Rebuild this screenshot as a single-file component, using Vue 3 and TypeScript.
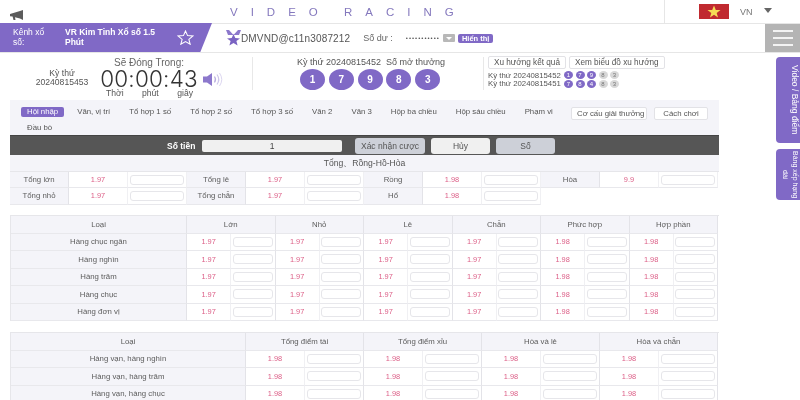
<script setup lang="ts">
const navItems = ['Văn, vị trí', 'Tổ hợp 1 số', 'Tổ hợp 2 số', 'Tổ hợp 3 số', 'Văn 2', 'Văn 3', 'Hộp ba chiều', 'Hộp sáu chiều', 'Phạm vi', 'Đầu bò']
const balls = ['1', '7', '9', '8', '3']
const history = [
  { id: '20240815452', nums: ['1', '7', '9', '8', '3'] },
  { id: '20240815451', nums: ['7', '8', '4', '8', '3'] },
]

const sumRows = [
  [
    { label: 'Tổng lớn', odds: '1.97' },
    { label: 'Tổng lẻ', odds: '1.97' },
    { label: 'Rồng', odds: '1.98' },
    { label: 'Hòa', odds: '9.9' },
  ],
  [
    { label: 'Tổng nhỏ', odds: '1.97' },
    { label: 'Tổng chẵn', odds: '1.97' },
    { label: 'Hổ', odds: '1.98' },
  ],
]

const digitHeads = ['Lớn', 'Nhỏ', 'Lẻ', 'Chẵn', 'Phức hợp', 'Hợp phần']
const digitOdds = ['1.97', '1.97', '1.97', '1.97', '1.98', '1.98']
const digitRows = ['Hàng chục ngân', 'Hàng nghìn', 'Hàng trăm', 'Hàng chục', 'Hàng đơn vị']

const pairHeads = ['Tổng điểm tài', 'Tổng điểm xỉu', 'Hòa và lẻ', 'Hòa và chẵn']
const pairRows = ['Hàng vạn, hàng nghìn', 'Hàng vạn, hàng trăm', 'Hàng vạn, hàng chục']
</script>

<template>
  <div class="page">
    <header class="topbar">
      <svg class="horn" viewBox="0 0 14 11" width="14" height="11">
        <path d="M0 4 L10 1 L13 0 L13 10 L10 8.5 L5 7.2 L5.5 10 L3.5 10 L2.6 6.6 L0 6.2 Z" fill="#5c5c5c" />
      </svg>
      <div class="brand">VIDEO RACING</div>
      <div class="lang">
        <svg class="flag" viewBox="0 0 30 15" width="30" height="15">
          <rect width="30" height="15" fill="#c02a30" />
          <polygon points="15,1.5 16.8,6 21.5,6 17.7,9 19,13.5 15,10.8 11,13.5 12.3,9 8.5,6 13.2,6" fill="#f5dc55" />
        </svg>
        <span class="lang-code">VN</span>
        <span class="lang-arrow"></span>
      </div>
    </header>

    <section class="account">
      <div class="channel">
        <span class="channel-label">Kênh xổ số:</span>
        <span class="channel-name">VR Kim Tinh Xổ số 1.5 Phút</span>
        <svg class="star" viewBox="0 0 18 16" width="17" height="15">
          <polygon points="9,1 11.2,6 17,6.4 12.6,10 14,15.2 9,12.4 4,15.2 5.4,10 1,6.4 6.8,6" fill="none" stroke="#fff" stroke-width="1.1" />
        </svg>
      </div>
      <svg class="medal" viewBox="0 0 15 16" width="15" height="16">
        <path d="M0 0 L3 0 L7.5 5 L12 0 L15 0 L13 5 L2 5 Z" fill="#8c78cc" />
        <polygon points="7.5,4 9.3,8 14,8.4 10.4,11 11.6,15.6 7.5,13 3.4,15.6 4.6,11 1,8.4 5.7,8" fill="#7a63c2" />
      </svg>
      <span class="user">DMVND@c11n3087212</span>
      <span class="balance-label">Số dư :</span>
      <span class="balance-dots">•••••••••••</span>
      <span class="balance-drop"></span>
      <span class="balance-show">Hiển thị</span>
      <div class="menu-btn"><i></i><i></i><i></i></div>
    </section>

    <section class="draw">
      <div class="issue">
        <span>Kỳ thứ</span>
        <span>20240815453</span>
      </div>
      <div class="timer">
        <div class="timer-title">Sẽ Đóng Trong:</div>
        <div class="timer-clock">00:00:43</div>
        <div class="timer-units"><span>Thời</span><span>phút</span><span>giây</span></div>
      </div>
      <svg class="sound" viewBox="0 0 20 15" width="20" height="15">
        <path d="M0 4.5 H4 L9 1 V14 L4 10.5 H0 Z" fill="#8c78cc" />
        <path d="M11.5 4.5 Q13.5 7.5 11.5 10.5" fill="none" stroke="#b9addf" stroke-width="1.2" />
        <path d="M14 2.5 Q17.5 7.5 14 12.5" fill="none" stroke="#cfc7ea" stroke-width="1.2" />
        <path d="M16.5 1 Q21 7.5 16.5 14" fill="none" stroke="#dcd6f0" stroke-width="1" />
      </svg>
      <div class="divider first"></div>
      <div class="latest">
        <div class="latest-title">Kỳ thứ 20240815452&nbsp; Số mở thưởng</div>
        <div class="balls">
          <span v-for="(b, i) in balls" :key="i" class="ball">{{ b }}</span>
        </div>
      </div>
      <div class="divider"></div>
      <div class="trend">
        <div class="trend-btns">
          <span class="ghost-btn">Xu hướng kết quả</span>
          <span class="ghost-btn">Xem biểu đồ xu hướng</span>
        </div>
        <div v-for="row in history" :key="row.id" class="trend-row">
          <span class="trend-id">Kỳ thứ {{ row.id }}</span>
          <span
            v-for="(n, i) in row.nums"
            :key="i"
            class="mini"
            :class="{ grey: i > 2 }"
          >{{ n }}</span>
        </div>
      </div>
    </section>

    <main class="board">
      <nav class="tabs">
        <ul class="tab-list">
          <li class="tab active">Hội nhập</li>
          <li v-for="item in navItems" :key="item" class="tab">{{ item }}</li>
        </ul>
        <div class="tab-actions">
          <span class="ghost-btn prize">Cơ cấu giải thưởng</span>
          <span class="ghost-btn howto">Cách chơi</span>
        </div>
      </nav>

      <div class="amount">
        <span class="amount-label">Số tiền</span>
        <div class="amount-input">1</div>
        <span class="amount-btn confirm">Xác nhận cược</span>
        <span class="amount-btn cancel">Hủy</span>
        <span class="amount-btn number">Số</span>
      </div>

      <div class="group-title">Tổng、Rồng-Hồ-Hòa</div>
      <div class="sum-table">
        <template v-for="(row, r) in sumRows" :key="r">
          <template v-for="cell in row" :key="cell.label">
            <div class="cell head">{{ cell.label }}</div>
            <div class="cell odds">{{ cell.odds }}</div>
            <div class="cell"><span class="field"></span></div>
          </template>
        </template>
      </div>

      <div class="grid digit-table">
        <div class="cell th">Loại</div>
        <div v-for="h in digitHeads" :key="h" class="cell th span2">{{ h }}</div>
        <template v-for="row in digitRows" :key="row">
          <div class="cell head">{{ row }}</div>
          <template v-for="(o, i) in digitOdds" :key="i">
            <div class="cell odds">{{ o }}</div>
            <div class="cell end"><span class="field"></span></div>
          </template>
        </template>
      </div>

      <div class="grid pair-table">
        <div class="cell th">Loại</div>
        <div v-for="h in pairHeads" :key="h" class="cell th span2">{{ h }}</div>
        <template v-for="row in pairRows" :key="row">
          <div class="cell head">{{ row }}</div>
          <template v-for="h in pairHeads" :key="h">
            <div class="cell odds">1.98</div>
            <div class="cell end"><span class="field"></span></div>
          </template>
        </template>
      </div>
    </main>

    <aside class="side-tab video">Video / Bảng điểm</aside>
    <aside class="side-tab rank">Bảng xếp hạng dài</aside>
  </div>
</template>

<style>
html,
body {
  margin: 0;
  background: #fff;
  overflow: hidden;
}
</style>

<style scoped>
.page {
  position: relative;
  width: 800px;
  height: 400px;
  overflow: hidden;
  background: #fff;
  color: #555;
  font-family: "Liberation Sans", Arial, sans-serif;
  font-size: 8px;
  filter: blur(0.45px);
}

.topbar {
  display: flex;
  align-items: center;
  height: 23px;
  border-bottom: 1px solid #e6e6e6;
  box-sizing: content-box;
}

.horn {
  margin: 7px 0 0 10px;
}

.brand {
  margin-left: 206px;
  width: 434px;
  color: #8478bd;
  font-size: 11.5px;
  letter-spacing: 13px;
  word-spacing: -3px;
  white-space: pre;
}

.lang {
  display: flex;
  align-items: center;
  align-self: stretch;
  flex: 1;
  border-left: 1px solid #e6e6e6;
  padding-left: 34px;
}

.lang-code {
  margin-left: 11px;
  font-size: 9px;
  color: #777;
}

.lang-arrow {
  margin: 0 0 2px 11px;
  border-left: 4px solid transparent;
  border-right: 4px solid transparent;
  border-top: 5px solid #666;
}

.account {
  position: relative;
  display: flex;
  align-items: center;
  height: 28px;
  border-bottom: 1px solid #e6e6e6;
}

.channel {
  display: flex;
  align-items: center;
  width: 212px;
  height: 29px;
  margin-top: -1px;
  padding-left: 13px;
  box-sizing: border-box;
  background: #8069c6;
  color: #fff;
  clip-path: polygon(0 0, 100% 0, 94.5% 100%, 0 100%);
  font-size: 8.5px;
  line-height: 9.5px;
}

.channel-label {
  width: 38px;
  margin-right: 14px;
}

.channel-name {
  width: 95px;
  font-weight: bold;
}

.star {
  margin-left: 17px;
}

.medal {
  margin-left: 14px;
}

.user {
  font-size: 10px;
  color: #555;
  letter-spacing: 0.15px;
}

.balance-label {
  margin-left: 13px;
  font-size: 9px;
  color: #666;
}

.balance-dots {
  margin-left: 13px;
  font-size: 6px;
  letter-spacing: 1px;
  color: #555;
}

.balance-drop {
  position: relative;
  width: 12px;
  height: 8px;
  margin-left: 3px;
  border-radius: 1px;
  background: #b8b8b8;
}

.balance-drop::after {
  content: "";
  position: absolute;
  left: 3px;
  top: 3px;
  border-left: 3px solid transparent;
  border-right: 3px solid transparent;
  border-top: 3px solid #fff;
}

.balance-show {
  margin-left: 3px;
  padding: 0 4px;
  height: 9px;
  line-height: 9px;
  border-radius: 2px;
  background: #8069c6;
  color: #fff;
  font-size: 7.5px;
  font-weight: bold;
}

.menu-btn {
  position: absolute;
  right: 0;
  top: 0;
  width: 35px;
  height: 28px;
  display: flex;
  flex-direction: column;
  align-items: center;
  justify-content: center;
  gap: 5px;
  background: #b4b4b4;
}

.menu-btn i {
  width: 20px;
  height: 2px;
  background: #f3f3f3;
}

.draw {
  display: flex;
  height: 47px;
}

.issue {
  display: flex;
  flex-direction: column;
  align-items: center;
  width: 56px;
  margin: 16px 0 0 34px;
  line-height: 9px;
  font-size: 8.6px;
}

.timer {
  width: 100px;
  margin-left: 9px;
  text-align: center;
}

.timer-title {
  margin-top: 4px;
  font-size: 10px;
  line-height: 11px;
  color: #666;
}

.timer-clock {
  font-family: Inter, "Liberation Sans", sans-serif;
  font-size: 22.5px;
  font-weight: 300;
  letter-spacing: 0.2px;
  line-height: 21px;
  color: #333;
  white-space: nowrap;
}

.timer-units {
  display: flex;
  justify-content: space-between;
  padding: 0 6px 0 7px;
  font-size: 8.6px;
  line-height: 9px;
}

.sound {
  margin: 19px 0 0 4px;
}

.divider {
  width: 1px;
  height: 33px;
  margin-top: 4px;
  background: #e8e8e8;
}

.divider.first {
  margin-left: 29px;
}

.latest {
  width: 230px;
  padding-left: 44px;
  box-sizing: border-box;
}

.latest-title {
  margin-top: 4px;
  font-size: 9px;
  line-height: 10px;
  white-space: nowrap;
}

.balls {
  display: flex;
  gap: 3.8px;
  margin: 2px 0 0 3px;
}

.ball {
  width: 25px;
  height: 21px;
  line-height: 21px;
  border-radius: 50%;
  background: #8069c6;
  color: #fff;
  font-size: 10px;
  font-weight: bold;
  text-align: center;
}

.trend {
  padding: 3px 0 0 4px;
}

.trend-btns {
  display: flex;
  gap: 3px;
  margin-bottom: 2px;
}

.ghost-btn {
  display: inline-block;
  height: 11px;
  line-height: 11px;
  padding: 0 5px;
  border: 1px solid #e2e2e6;
  border-radius: 2px;
  background: #fff;
  font-size: 8.2px;
  color: #555;
  white-space: nowrap;
}

.trend-row {
  display: flex;
  align-items: center;
  height: 8.5px;
  font-size: 7.8px;
}

.trend-id {
  width: 76px;
  white-space: nowrap;
}

.mini {
  width: 9px;
  height: 8px;
  margin-right: 2.5px;
  line-height: 8px;
  border-radius: 50%;
  background: #8069c6;
  color: #fff;
  font-size: 6px;
  text-align: center;
}

.mini.grey {
  background: #d8d8d8;
  color: #777;
}

.board {
  width: 709px;
  margin: 0 0 0 10px;
}

.tabs {
  display: flex;
  height: 35px;
  background: #f4f4f9;
  box-sizing: border-box;
  padding: 7px 0 0 11px;
}

.tab-list {
  display: flex;
  flex-wrap: wrap;
  align-content: flex-start;
  width: 545px;
  margin: 0;
  padding: 0;
  list-style: none;
}

.tab {
  height: 10px;
  line-height: 10px;
  margin: 0 7px 6px 0;
  padding: 0 6px;
  border-radius: 2px;
  font-size: 7.8px;
  white-space: nowrap;
  color: #555;
}

.tab.active {
  background: #8069c6;
  color: #fff;
}

.tab-actions {
  display: flex;
  align-items: flex-start;
  gap: 7px;
  margin-left: 5px;
}

.prize {
  width: 64px;
  text-align: center;
  font-size: 7.8px;
}

.howto {
  width: 42px;
  text-align: center;
  font-size: 7.8px;
}

.amount {
  display: flex;
  align-items: center;
  height: 20px;
  background: #565656;
  border-top: 1px solid #444;
  box-sizing: border-box;
  padding-left: 157px;
}

.amount-label {
  width: 35px;
  color: #fff;
  font-size: 8.5px;
  font-weight: bold;
}

.amount-input {
  width: 140px;
  height: 12px;
  line-height: 12px;
  border-radius: 2px;
  background: #f0f0f0;
  font-size: 8.5px;
  text-align: center;
  color: #444;
}

.amount-btn {
  height: 16px;
  line-height: 16px;
  border-radius: 3px;
  background: #cdd0d8;
  font-size: 8.5px;
  text-align: center;
  color: #555;
}

.amount-btn.confirm {
  width: 70px;
  margin-left: 13px;
}

.amount-btn.cancel {
  width: 59px;
  margin-left: 6px;
  background: #f0f0f0;
}

.amount-btn.number {
  width: 59px;
  margin-left: 6px;
}

.group-title {
  height: 17px;
  line-height: 17px;
  background: #f4f4f9;
  border-bottom: 1px solid #e6e6ea;
  box-sizing: border-box;
  text-align: center;
  font-size: 8.6px;
}

.sum-table {
  display: grid;
  grid-template-columns: repeat(12, 59px);
  grid-auto-rows: 16.3px;
  margin-bottom: 10.5px;
}

.grid {
  display: grid;
  grid-auto-rows: 17.5px;
  border-top: 1px solid #e6e6ea;
  border-left: 1px solid #e6e6ea;
  margin-bottom: 11px;
}

.digit-table {
  grid-template-columns: 176px repeat(12, 44.25px);
}

.pair-table {
  grid-template-columns: 235px repeat(8, 59px);
}

.cell {
  display: flex;
  align-items: center;
  justify-content: center;
  box-sizing: border-box;
  border-right: 1px solid #f0f0f3;
  border-bottom: 1px solid #e8e8ec;
  font-size: 7.8px;
  color: #5c5c5c;
  background: #fff;
}

.cell.head,
.cell.th {
  background: #f4f4f9;
  border-right-color: #e3e3e8;
}

.cell.end {
  border-right-color: #e3e3e8;
}

.cell.span2 {
  grid-column: span 2;
}

.cell.odds {
  color: #dc5f87;
  font-size: 7.4px;
}

.field {
  width: 88%;
  height: 8px;
  border: 1px solid #e6e6ea;
  border-radius: 3px;
  background: #fff;
}

.side-tab {
  position: absolute;
  right: 0;
  width: 24px;
  box-sizing: border-box;
  border-radius: 4px 0 0 4px;
  background: #8069c6;
  color: #fff;
  writing-mode: vertical-rl;
  text-align: center;
  font-size: 8.5px;
  line-height: 10px;
}

.side-tab.video {
  top: 57px;
  height: 86px;
}

.side-tab.rank {
  top: 149px;
  height: 51px;
  font-size: 7px;
}
</style>
